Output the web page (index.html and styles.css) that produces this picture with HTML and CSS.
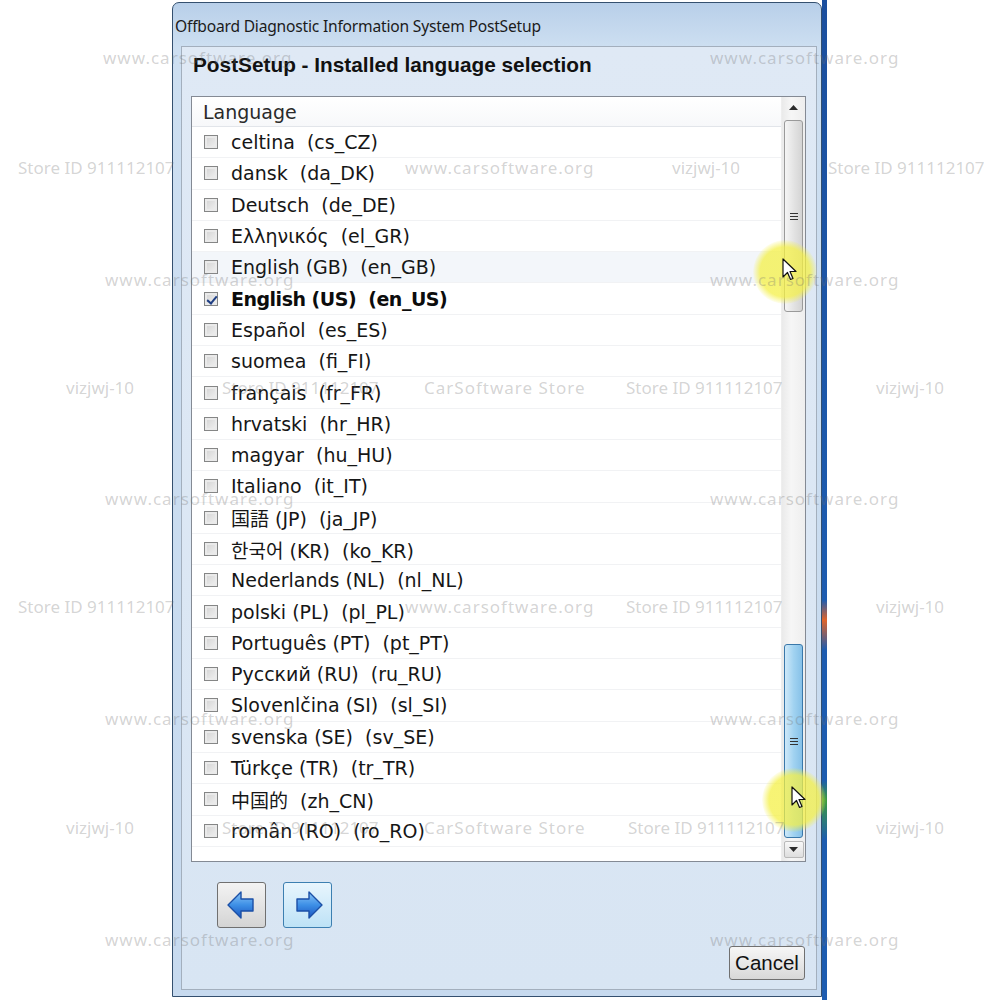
FILE: index.html
```html
<!DOCTYPE html>
<html lang="en">
<head>
    <meta charset="UTF-8">
    <title>PostSetup - Installed language selection</title>
    <link rel="stylesheet" href="styles.css">
</head>
<body>
    <div class="desk">
        <div class="window">
            <div class="title-bar">Offboard Diagnostic Information System PostSetup</div>

            <div class="panel">
                <h1 class="page-title">PostSetup - Installed language selection</h1>

                <div class="list-box">
                    <div class="list-body">
                        <div class="list-header">Language</div>
                        <div class="row"><span class="check"></span><span class="label">celtina  (cs_CZ)</span></div>
                        <div class="row"><span class="check"></span><span class="label">dansk  (da_DK)</span></div>
                        <div class="row"><span class="check"></span><span class="label">Deutsch  (de_DE)</span></div>
                        <div class="row"><span class="check"></span><span class="label">Ελληνικός  (el_GR)</span></div>
                        <div class="row hover"><span class="check"></span><span class="label">English (GB)  (en_GB)</span></div>
                        <div class="row selected"><span class="check checked"></span><span class="label">English (US)  (en_US)</span></div>
                        <div class="row"><span class="check"></span><span class="label">Español  (es_ES)</span></div>
                        <div class="row"><span class="check"></span><span class="label">suomea  (fi_FI)</span></div>
                        <div class="row"><span class="check"></span><span class="label">français  (fr_FR)</span></div>
                        <div class="row"><span class="check"></span><span class="label">hrvatski  (hr_HR)</span></div>
                        <div class="row"><span class="check"></span><span class="label">magyar  (hu_HU)</span></div>
                        <div class="row"><span class="check"></span><span class="label">Italiano  (it_IT)</span></div>
                        <div class="row"><span class="check"></span><span class="label">国語 (JP)  (ja_JP)</span></div>
                        <div class="row"><span class="check"></span><span class="label">한국어 (KR)  (ko_KR)</span></div>
                        <div class="row"><span class="check"></span><span class="label">Nederlands (NL)  (nl_NL)</span></div>
                        <div class="row"><span class="check"></span><span class="label">polski (PL)  (pl_PL)</span></div>
                        <div class="row"><span class="check"></span><span class="label">Português (PT)  (pt_PT)</span></div>
                        <div class="row"><span class="check"></span><span class="label">Русский (RU)  (ru_RU)</span></div>
                        <div class="row"><span class="check"></span><span class="label">Slovenlčina (SI)  (sl_SI)</span></div>
                        <div class="row"><span class="check"></span><span class="label">svenska (SE)  (sv_SE)</span></div>
                        <div class="row"><span class="check"></span><span class="label">Türkçe (TR)  (tr_TR)</span></div>
                        <div class="row"><span class="check"></span><span class="label">中国的  (zh_CN)</span></div>
                        <div class="row"><span class="check"></span><span class="label">român (RO)  (ro_RO)</span></div>
                    </div>

                    <div class="scrollbar">
                        <div class="scroll-btn">
                            <svg width="9" height="6" viewBox="0 0 9 6"><path d="M0 6 L4.5 1 L9 6 Z" fill="#2b2b2b"/></svg>
                        </div>
                        <div class="thumb thumb-top"><span class="grip"></span></div>
                        <div class="thumb thumb-bottom"><span class="grip"></span></div>
                        <div class="scroll-btn scroll-btn-down">
                            <svg width="9" height="6" viewBox="0 0 9 6"><path d="M0 0 L9 0 L4.5 5 Z" fill="#2b2b2b"/></svg>
                        </div>
                    </div>
                </div>

                <div class="nav-buttons">
                    <button class="nav-btn">
                        <svg width="32" height="32" viewBox="0 0 32 32">
                            <defs>
                                <linearGradient id="arrowBlue" x1="0" y1="0" x2="0" y2="1">
                                    <stop offset="0" stop-color="#8cc6f7"/>
                                    <stop offset="0.5" stop-color="#3d8fe6"/>
                                    <stop offset="1" stop-color="#1a55c0"/>
                                </linearGradient>
                            </defs>
                            <path d="M2 16 L15 3 L15 10 L27 10 L27 22 L15 22 L15 29 Z" fill="url(#arrowBlue)" stroke="#1b4fa6" stroke-width="1.4" stroke-linejoin="round"/>
                        </svg>
                    </button>
                    <button class="nav-btn nav-btn-active">
                        <svg width="32" height="32" viewBox="0 0 32 32">
                            <path d="M30 16 L17 3 L17 10 L5 10 L5 22 L17 22 L17 29 Z" fill="url(#arrowBlue)" stroke="#1b4fa6" stroke-width="1.4" stroke-linejoin="round"/>
                        </svg>
                    </button>
                </div>

                <button class="cancel-btn">Cancel</button>
            </div>
        </div>
        <div class="desk-edge"></div>
    </div>

    <!-- pointer highlights from the recording -->
    <div class="pointer pointer-one">
        <svg width="16" height="24" viewBox="0 0 16 24"><path d="M1 1 L1 19 L5.5 14.5 L8.5 21.5 L11 20.5 L8 13.5 L14 13.5 Z" fill="#fff" stroke="#111" stroke-width="1.2" stroke-linejoin="round"/></svg>
    </div>
    <div class="pointer pointer-two">
        <svg width="16" height="24" viewBox="0 0 16 24"><path d="M1 1 L1 19 L5.5 14.5 L8.5 21.5 L11 20.5 L8 13.5 L14 13.5 Z" fill="#fff" stroke="#111" stroke-width="1.2" stroke-linejoin="round"/></svg>
    </div>

    <!-- watermark layer -->
    <div class="watermarks">
        <span class="wm site w1">www.carsoftware.org</span>
        <span class="wm site w2">www.carsoftware.org</span>
        <span class="wm w3">Store ID 911112107</span>
        <span class="wm site w4">www.carsoftware.org</span>
        <span class="wm w5">vizjwj-10</span>
        <span class="wm w6">Store ID 911112107</span>
        <span class="wm site w7">www.carsoftware.org</span>
        <span class="wm site w8">www.carsoftware.org</span>
        <span class="wm w9">vizjwj-10</span>
        <span class="wm w10">Store ID 911112107</span>
        <span class="wm site w11">CarSoftware Store</span>
        <span class="wm w12">Store ID 911112107</span>
        <span class="wm w13">vizjwj-10</span>
        <span class="wm site w14">www.carsoftware.org</span>
        <span class="wm site w15">www.carsoftware.org</span>
        <span class="wm w16">Store ID 911112107</span>
        <span class="wm site w17">www.carsoftware.org</span>
        <span class="wm w18">Store ID 911112107</span>
        <span class="wm w19">vizjwj-10</span>
        <span class="wm site w20">www.carsoftware.org</span>
        <span class="wm site w21">www.carsoftware.org</span>
        <span class="wm w22">vizjwj-10</span>
        <span class="wm w23">Store ID 911112107</span>
        <span class="wm site w24">CarSoftware Store</span>
        <span class="wm w25">Store ID 911112107</span>
        <span class="wm w26">vizjwj-10</span>
        <span class="wm site w27">www.carsoftware.org</span>
        <span class="wm site w28">www.carsoftware.org</span>
    </div>
</body>
</html>
```

FILE: styles.css
```css
* {
    box-sizing: border-box;
}

body {
    margin: 0;
    width: 1000px;
    height: 1000px;
    overflow: hidden;
    position: relative;
    background-color: #ffffff;
    font-family: "DejaVu Sans", "Noto Sans CJK JP", sans-serif;
}

.desk {
    display: flex;
    height: 1000px;
    padding-left: 172px;
    padding-top: 2px;
}

.window {
    width: 650px;
    height: 995px;
    border: 1px solid #34506f;
    border-radius: 7px 7px 0 0;
    background: linear-gradient(#b8cfe9, #cddff1 44px, #c7daef);
    display: flex;
    flex-direction: column;
    padding: 0 4px 6px 0;
}

.desk-edge {
    width: 5px;
    height: 1000px;
    margin-top: -2px;
    background: linear-gradient(#1b4f9e, #1d5cb0 60%, #e0642a 62%, #1d5cb0 65%, #1d5cb0 78%, #3b9a3e 80%, #1d5cb0 84%);
}

.title-bar {
    height: 43px;
    display: flex;
    align-items: center;
    padding: 3px 0 0 2px;
    font-family: "Noto Sans", sans-serif;
    font-size: 15.6px;
    letter-spacing: -0.2px;
    color: #1b1b1b;
}

.panel {
    flex: 1;
    margin-left: 8px;
    border: 1px solid #a3afbd;
    background: linear-gradient(#dfe9f5, #d8e5f3);
    display: flex;
    flex-direction: column;
}

.page-title {
    margin: 5px 0 18px 11px;
    font-family: "Liberation Sans", Arial, sans-serif;
    font-size: 20.8px;
    line-height: 26px;
    font-weight: bold;
    color: #111;
}

.list-box {
    margin-left: 9px;
    width: 615px;
    height: 766px;
    border: 1px solid #848a94;
    background-color: #ffffff;
    display: flex;
}

.list-body {
    flex: 1;
}

.list-header {
    height: 30px;
    padding-left: 11px;
    display: flex;
    align-items: center;
    font-size: 19px;
    color: #2a2a2a;
    border-bottom: 1px solid #e2e5ea;
    background: linear-gradient(#ffffff, #f7f8fa);
}

.row {
    height: 31.3px;
    display: flex;
    align-items: center;
    padding-left: 12px;
    gap: 13px;
    border-bottom: 1px solid #f1f2f4;
}

.row.hover {
    background-color: #f3f6fa;
}

.label {
    white-space: pre;
    font-size: 19px;
    color: #161616;
}

.row.selected .label {
    font-weight: bold;
    letter-spacing: -0.5px;
    color: #0c0c0c;
}

.check {
    width: 14px;
    height: 14px;
    border: 1px solid #858686;
    background: linear-gradient(135deg, #d2d2d2, #f2f2f2);
    box-shadow: inset 0 0 0 2px #eaeaea;
    position: relative;
}

.check.checked::after {
    content: "";
    position: absolute;
    left: 4px;
    top: 1px;
    width: 4px;
    height: 8px;
    border: solid #1f3e83;
    border-width: 0 2px 2px 0;
    transform: rotate(40deg);
}

.scrollbar {
    width: 24px;
    background: linear-gradient(to right, #eaeaea, #f6f6f6 40%, #eeeeee);
    border-left: 1px solid #eeeeee;
    display: flex;
    flex-direction: column;
    align-items: center;
}

.scroll-btn {
    width: 20px;
    height: 19px;
    display: flex;
    align-items: center;
    justify-content: center;
}

.scroll-btn-down {
    margin-top: 3px;
    height: 17px;
    border: 1px solid #b9b9b9;
    border-radius: 2px;
    background: linear-gradient(#f8f8f8, #dedede);
}

.thumb {
    width: 19px;
    border-radius: 3px;
    display: flex;
    align-items: center;
    justify-content: center;
}

.thumb-top {
    margin-top: 4px;
    height: 192px;
    border: 1px solid #9a9a9a;
    background: linear-gradient(to right, #f5f5f5, #e2e2e2 55%, #d4d4d4);
}

.thumb-bottom {
    margin-top: 332px;
    height: 194px;
    border: 1px solid #3a78aa;
    background: linear-gradient(to right, #cfe9f9, #a2d3f1 50%, #86c1e8);
}

.grip {
    width: 8px;
    height: 7px;
    border-top: 1px solid #333;
    border-bottom: 1px solid #333;
    position: relative;
}

.grip::after {
    content: "";
    position: absolute;
    left: 0;
    right: 0;
    top: 2px;
    border-top: 1px solid #333;
}

.nav-buttons {
    display: flex;
    gap: 17px;
    margin: 20px 0 0 35px;
}

.nav-btn {
    width: 49px;
    height: 46px;
    padding: 0;
    border: 1px solid #707070;
    border-radius: 3px;
    background: linear-gradient(#f3f3f3, #e4e4e4 50%, #d4d4d4);
    display: flex;
    align-items: center;
    justify-content: center;
}

.nav-btn-active {
    border-color: #3c7fb1;
    background: linear-gradient(#e8f5fd, #d3ecfa 50%, #bde2f6);
}

.cancel-btn {
    align-self: flex-end;
    margin: 18px 11px 0 0;
    width: 76px;
    height: 34px;
    padding: 0;
    border: 1px solid #707070;
    border-radius: 3px;
    background: linear-gradient(#f6f6f6, #e8e8e8 50%, #d8d8d8);
    font-family: "Liberation Sans", Arial, sans-serif;
    font-size: 20.5px;
    color: #111;
}

.pointer {
    position: absolute;
    width: 64px;
    height: 64px;
    border-radius: 50%;
    background: radial-gradient(circle, rgba(244, 240, 70, 0.75) 55%, rgba(244, 240, 70, 0) 72%);
    display: flex;
    align-items: center;
    justify-content: center;
}

.pointer svg {
    margin: -4px 0 0 10px;
}

.pointer-one {
    left: 753px;
    top: 240px;
}

.pointer-two {
    left: 762px;
    top: 768px;
}

.watermarks {
    position: absolute;
    inset: 0;
    pointer-events: none;
}

.wm {
    position: absolute;
    font-family: "Noto Sans", sans-serif;
    font-size: 17px;
    line-height: 20px;
    color: rgba(110, 110, 110, 0.3);
    white-space: nowrap;
}

.wm.site {
    letter-spacing: 1px;
}

.w1 { left: 103px; top: 48px; }
.w2 { left: 710px; top: 48px; }
.w3 { left: 18px; top: 158px; }
.w4 { left: 405px; top: 158px; }
.w5 { left: 672px; top: 158px; }
.w6 { left: 828px; top: 158px; }
.w7 { left: 105px; top: 270px; }
.w8 { left: 710px; top: 270px; }
.w9 { left: 66px; top: 378px; }
.w10 { left: 222px; top: 378px; }
.w11 { left: 424px; top: 378px; }
.w12 { left: 626px; top: 378px; }
.w13 { left: 876px; top: 378px; }
.w14 { left: 105px; top: 489px; }
.w15 { left: 710px; top: 489px; }
.w16 { left: 18px; top: 597px; }
.w17 { left: 405px; top: 597px; }
.w18 { left: 626px; top: 597px; }
.w19 { left: 876px; top: 597px; }
.w20 { left: 105px; top: 709px; }
.w21 { left: 710px; top: 709px; }
.w22 { left: 66px; top: 818px; }
.w23 { left: 222px; top: 818px; }
.w24 { left: 424px; top: 818px; }
.w25 { left: 628px; top: 818px; }
.w26 { left: 876px; top: 818px; }
.w27 { left: 105px; top: 930px; }
.w28 { left: 710px; top: 930px; }
```
